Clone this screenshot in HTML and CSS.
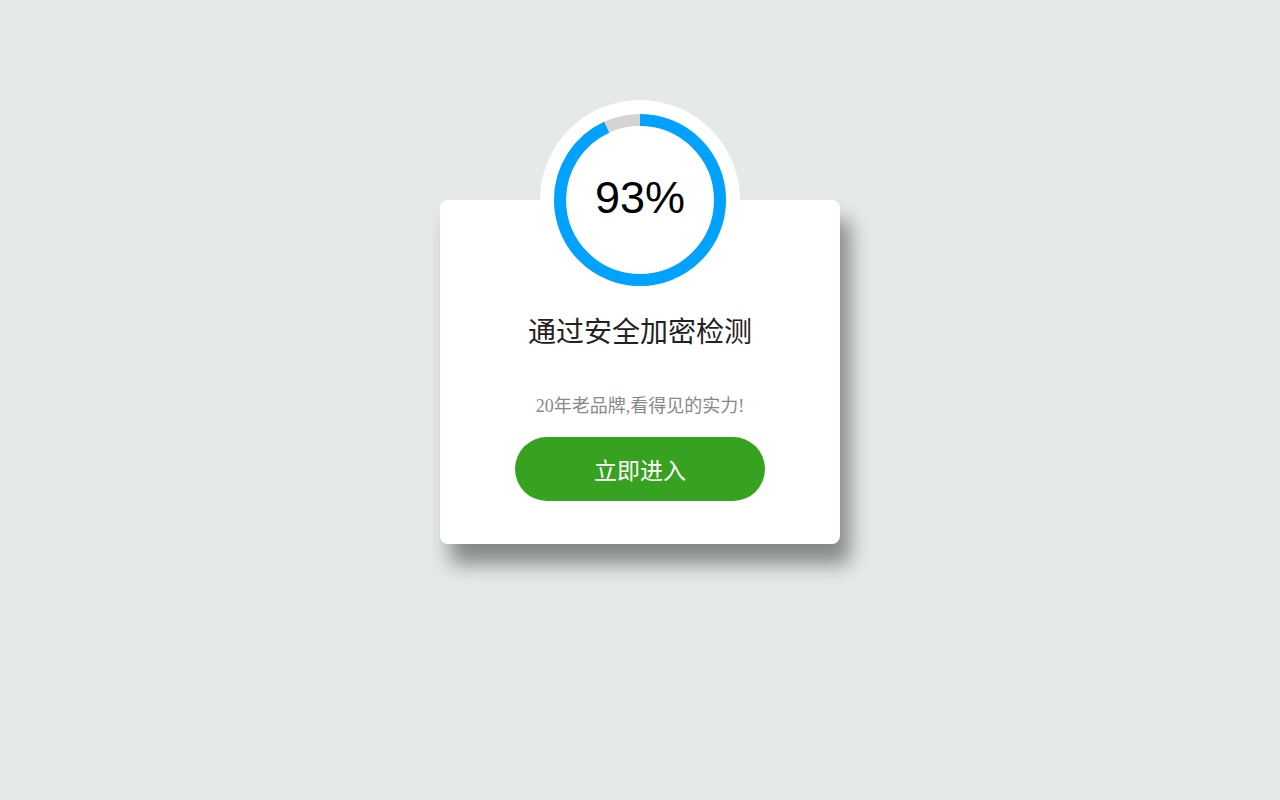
FILE: index.html
```html
<!DOCTYPE html>
<html lang="zh">
<head>
<meta charset="utf-8">
<title>安全检测</title>
<link rel="stylesheet" href="styles.css">
</head>
<body>
<div class="page">
<div class="card">
  <div class="badge">
    <svg class="ring" width="200" height="200" viewBox="0 0 200 200">
      <circle class="track" cx="100" cy="100" r="80"/>
      <circle class="bar" cx="100" cy="100" r="80" stroke-dasharray="467.46 502.65" transform="rotate(-90 100 100)"/>
    </svg>
    <div class="pct">93%</div>
  </div>
  <h1 class="title">通过安全加密检测</h1>
  <p class="sub">20年老品牌,看得见的实力!</p>
  <a class="btn" href="#">立即进入</a>
</div>
</div>
</body>
</html>
```
FILE: styles.css
```css
html, body {
  margin: 0;
  padding: 0;
  height: 100%;
}
body {
  background: #e5e9ea;
  font-family: "Liberation Sans", Arial, "Noto Sans CJK SC", sans-serif;
}
.page {
  min-height: 100%;
  padding-top: 200px;
  box-sizing: border-box;
}
.card {
  width: 400px;
  margin: 0 auto;
  background: #fff;
  border-radius: 8px;
  box-shadow: 10px 20px 20px rgba(0, 0, 0, 0.42);
  display: flex;
  flex-direction: column;
  align-items: center;
  padding-bottom: 43px;
}
.badge {
  width: 200px;
  height: 200px;
  margin-top: -100px;
  border-radius: 50%;
  background: #fff;
  display: flex;
  align-items: center;
  justify-content: center;
  position: relative;
}
.ring {
  position: absolute;
  left: 0;
  top: 0;
}
.track {
  fill: none;
  stroke: #d3d3d3;
  stroke-width: 12;
}
.bar {
  fill: none;
  stroke: #00a2ff;
  stroke-width: 12;
}
.pct {
  position: relative;
  font-family: "Liberation Sans", Arial, sans-serif;
  font-size: 45px;
  color: #000;
  line-height: 1;
  margin-top: -6px;
}
.title {
  margin: 12px 0 0;
  font-family: "Noto Sans CJK SC", sans-serif;
  font-weight: 400;
  font-size: 28px;
  line-height: 36px;
  color: #222;
}
.sub {
  margin: 46px 0 0;
  font-family: "Liberation Serif", "Noto Sans CJK SC", serif;
  font-size: 18px;
  line-height: 24px;
  color: #888;
}
.btn {
  margin-top: 19px;
  width: 250px;
  height: 64px;
  border-radius: 32px;
  background: #37a220;
  color: #fff;
  font-family: "Noto Sans CJK SC", sans-serif;
  font-size: 23px;
  display: flex;
  align-items: center;
  justify-content: center;
  text-decoration: none;
}
```
